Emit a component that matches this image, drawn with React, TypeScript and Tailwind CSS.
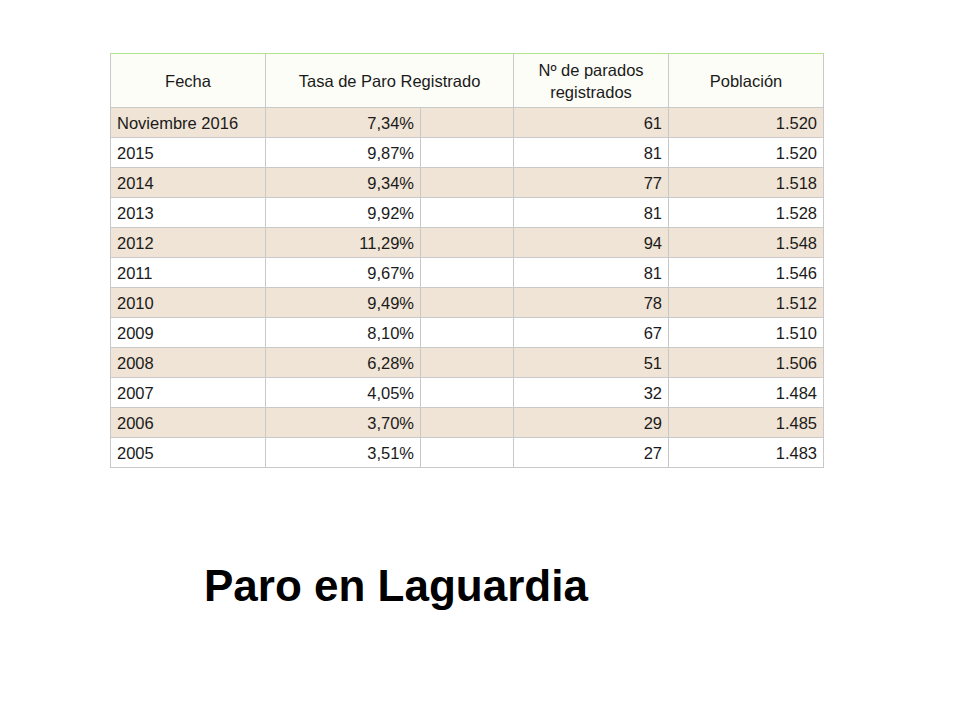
const rows: Array<[string, string, string, string]> = [
  ["Noviembre 2016", "7,34%", "61", "1.520"],
  ["2015", "9,87%", "81", "1.520"],
  ["2014", "9,34%", "77", "1.518"],
  ["2013", "9,92%", "81", "1.528"],
  ["2012", "11,29%", "94", "1.548"],
  ["2011", "9,67%", "81", "1.546"],
  ["2010", "9,49%", "78", "1.512"],
  ["2009", "8,10%", "67", "1.510"],
  ["2008", "6,28%", "51", "1.506"],
  ["2007", "4,05%", "32", "1.484"],
  ["2006", "3,70%", "29", "1.485"],
  ["2005", "3,51%", "27", "1.483"],
];

const cell = "border border-[#c9c9c9] px-[6px] h-[30px]";
const head = "border border-[#c9c9c9] border-t-[#b3e68c] font-normal text-center";

export default function App() {
  return (
    <div className="w-[960px] h-[720px] bg-white text-[#1a1a1a] font-['Liberation_Sans',sans-serif]">
      <div className="pt-[53px] pl-[110px]">
        <table className="border-collapse text-[16.5px] leading-[22px] table-fixed w-[713px]">
          <colgroup>
            <col className="w-[155px]" />
            <col className="w-[155px]" />
            <col className="w-[93px]" />
            <col className="w-[155px]" />
            <col className="w-[155px]" />
          </colgroup>
          <thead>
            <tr className="bg-[#fdfdf7] h-[54px]">
              <th className={head}>Fecha</th>
              <th colSpan={2} className={head}>
                Tasa de Paro Registrado
              </th>
              <th className={head}>
                Nº de parados
                <br />
                registrados
              </th>
              <th className={head}>Población</th>
            </tr>
          </thead>
          <tbody>
            {rows.map((r, i) => (
              <tr key={r[0]} className={i % 2 === 0 ? "bg-[#efe4d5]" : "bg-white"}>
                <td className={`${cell} text-left`}>{r[0]}</td>
                <td className={`${cell} text-right`}>{r[1]}</td>
                <td className={cell}></td>
                <td className={`${cell} text-right`}>{r[2]}</td>
                <td className={`${cell} text-right`}>{r[3]}</td>
              </tr>
            ))}
          </tbody>
        </table>
      </div>
      <h1 className="mt-[92px] ml-[204px] text-[44px] leading-[52px] font-bold text-black">Paro en Laguardia</h1>
    </div>
  );
}
